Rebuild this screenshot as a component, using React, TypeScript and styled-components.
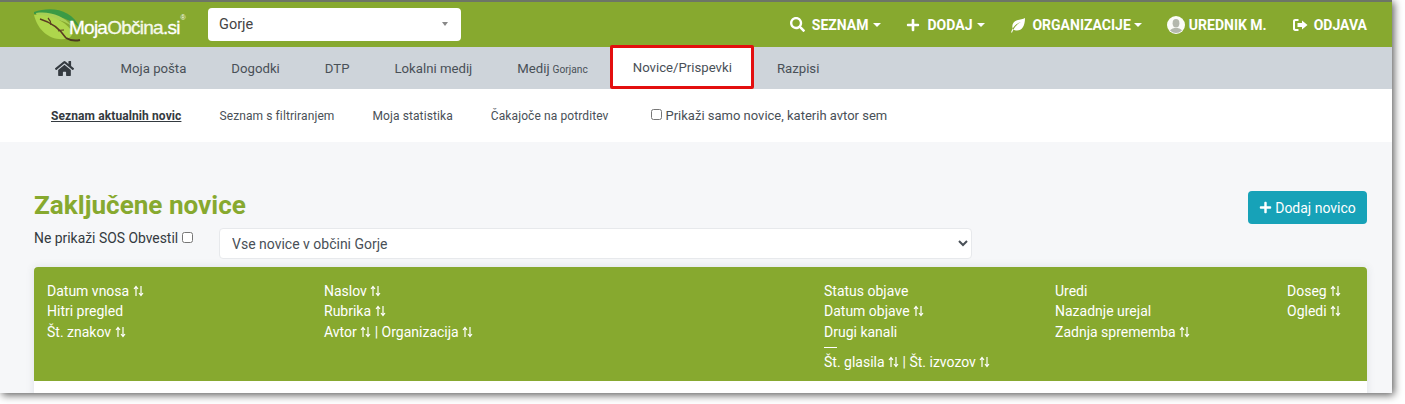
import React from 'react';
import styled, { createGlobalStyle } from 'styled-components';
import { FaHome, FaPlus, FaSearch } from 'react-icons/fa';

const GlobalStyle = createGlobalStyle`
  html, body {
    margin: 0;
    padding: 0;
    height: 404px;
    background: #fff;
  }
  body {
    font-family: Roboto, "Liberation Sans", sans-serif;
    color: #212529;
  }
  * {
    box-sizing: border-box;
  }
`;

const SortIcon = () => (
  <SortSvg viewBox="0 0 11 12" width="11" height="12" aria-hidden="true">
    <path
      d="M3 11V2M1 4l2-2.6L5 4M8 1v9M6 8l2 2.6L10 8"
      fill="none"
      stroke="currentColor"
      strokeWidth="1.2"
    />
  </SortSvg>
);

const LogoutIcon = () => (
  <svg viewBox="0 0 16 14" width="16" height="14" aria-hidden="true">
    <path
      d="M6.5 1H3.2C1.9 1 1 1.9 1 3.2v7.6C1 12.1 1.9 13 3.2 13h3.3v-2h-3c-.3 0-.5-.2-.5-.5v-7c0-.3.2-.5.5-.5h3z"
      fill="currentColor"
    />
    <path d="M10 2.5 15.5 7 10 11.5V9H5.5V5H10z" fill="currentColor" />
  </svg>
);

const LeafIcon = () => (
  <svg viewBox="0 0 16 16" width="16" height="16" aria-hidden="true">
    <path d="M15 1C15 9 12 13.5 7 13.5c-1.500 0-2.700-.4-3.500-1C5 9 8 6.500 11 5 7.500 6 4.500 8.500 2.700 11.500 1.500 8.500 3 4.500 7 3.200 10 2.200 13 2.500 15 1z" fill="currentColor" />
    <path d="M1 15.500c.4-1.400 1-2.800 1.800-4l.8.9c-.7 1-1.200 2.100-1.500 3.100z" fill="currentColor" />
  </svg>
);

const UserIcon = () => (
  <svg viewBox="0 0 18 18" width="18" height="18" aria-hidden="true">
    <circle cx="9" cy="9" r="9" fill="#fbfcf8" />
    <clipPath id="user-clip">
      <circle cx="9" cy="9" r="8" />
    </clipPath>
    <g clipPath="url(#user-clip)" fill="#b4b8ad">
      <ellipse cx="9" cy="7.2" rx="3.4" ry="4.2" />
      <path d="M2 18c0-4 2.500-5.500 5.500-6h3c3 .5 5.500 2 5.500 6z" />
    </g>
  </svg>
);

const LogoMark = () => (
  <svg viewBox="0 0 56 34" width="56" height="34" aria-hidden="true">
    <path d="M1 4C18 -2 39 1 47 20 36 9 18 6 1 6z" fill="#3b9a45" />
    <path d="M3 5C17 3 31 8 39 18c-9-6-22-9-35-9z" fill="#a8cf55" />
    <path d="M1 7c15-1 29 4 37 15 2 3 1 6-2 8C20 35 5 24 1 7z" fill="#aed64c" />
    <path d="M7 11c10 3 20 10 26 19" fill="none" stroke="#5a3b22" strokeWidth="1.6" />
    <path d="M18 17c0-3-1-5-3-7M25 23c2-1 4-1 6-1" fill="none" stroke="#5a3b22" strokeWidth="1.2" />
    <path d="M33 30c5 3 10 3 14 2" fill="none" stroke="#4b3a20" strokeWidth="2" />
  </svg>
);

const navItems = [
  { label: 'SEZNAM', icon: <FaSearch size={15} />, caret: true, gap: 7 },
  { label: 'DODAJ', icon: <FaPlus size={14} />, caret: true, gap: 8 },
  { label: 'ORGANIZACIJE', icon: <LeafIcon />, caret: true, gap: 6 },
  { label: 'UREDNIK M.', icon: <UserIcon />, caret: false, gap: 4 },
  { label: 'ODJAVA', icon: <LogoutIcon />, caret: false, gap: 6 },
];

const subLinks = ['Seznam aktualnih novic', 'Seznam s filtriranjem', 'Moja statistika', 'Čakajoče na potrditev'];

export default function App() {
  return (
    <>
      <GlobalStyle />
      <Frame>
        <TopBar>
          <Logo>
            <LogoMark />
            <LogoText>
              Moja<LogoAccent>Občina</LogoAccent>.si<LogoReg>®</LogoReg>
            </LogoText>
          </Logo>
          <CityPicker>
            Gorje
            <PickerCaret />
          </CityPicker>
          <TopNav>
            {navItems.map((item) => (
              <TopNavItem key={item.label} $gap={item.gap}>
                {item.icon}
                <span>{item.label}</span>
                {item.caret && <NavCaret />}
              </TopNavItem>
            ))}
          </TopNav>
        </TopBar>

        <MainNav>
          <HomeLink>
            <FaHome size={19} />
          </HomeLink>
          <MainLink>Moja pošta</MainLink>
          <MainLink>Dogodki</MainLink>
          <MainLink>DTP</MainLink>
          <MainLink>Lokalni medij</MainLink>
          <MainLink>
            Medij <small>Gorjanc</small>
          </MainLink>
          <ActiveLink>Novice/Prispevki</ActiveLink>
          <MainLink>Razpisi</MainLink>
        </MainNav>

        <SubNav>
          {subLinks.map((link, i) => (
            <SubLink key={link} $active={i === 0}>
              {link}
            </SubLink>
          ))}
          <AuthorFilter>
            <input type="checkbox" />
            Prikaži samo novice, katerih avtor sem
          </AuthorFilter>
        </SubNav>

        <Content>
          <TitleRow>
            <Title>Zaključene novice</Title>
            <AddButton>
              <FaPlus size={13} />
              Dodaj novico
            </AddButton>
          </TitleRow>
          <FilterRow>
            <SosFilter>
              Ne prikaži SOS Obvestil
              <input type="checkbox" />
            </SosFilter>
            <ScopeSelect defaultValue="all">
              <option value="all">Vse novice v občini Gorje</option>
            </ScopeSelect>
          </FilterRow>
          <Table>
            <TableHead>
              <HeadCol>
                <span>
                  Datum vnosa <SortIcon />
                </span>
                <span>Hitri pregled</span>
                <span>
                  Št. znakov <SortIcon />
                </span>
              </HeadCol>
              <HeadCol>
                <span>
                  Naslov <SortIcon />
                </span>
                <span>
                  Rubrika <SortIcon />
                </span>
                <span>
                  Avtor <SortIcon /> | Organizacija <SortIcon />
                </span>
              </HeadCol>
              <HeadCol>
                <span>Status objave</span>
                <span>
                  Datum objave <SortIcon />
                </span>
                <span>Drugi kanali</span>
                <ShortRule />
                <span>
                  Št. glasila <SortIcon /> | Št. izvozov <SortIcon />
                </span>
              </HeadCol>
              <HeadCol>
                <span>Uredi</span>
                <span>Nazadnje urejal</span>
                <span>
                  Zadnja sprememba <SortIcon />
                </span>
              </HeadCol>
              <HeadCol>
                <span>
                  Doseg <SortIcon />
                </span>
                <span>
                  Ogledi <SortIcon />
                </span>
              </HeadCol>
            </TableHead>
            <TableBody />
          </Table>
        </Content>
      </Frame>
    </>
  );
}

const Frame = styled.div`
  width: 1392px;
  height: 393px;
  overflow: hidden;
  border-top: 2px solid #6d7566;
  background: #f6f7f9;
  box-shadow: 2px 2px 8px rgba(0, 0, 0, 0.65);
`;

const TopBar = styled.header`
  height: 45px;
  display: flex;
  align-items: center;
  background: #87a92f;
  padding: 0 25px 0 33px;
`;

const Logo = styled.div`
  width: 175px;
  display: flex;
  align-items: center;
  flex-shrink: 0;
`;

const LogoText = styled.div`
  margin-left: -20px;
  margin-top: 7px;
  font-family: "Liberation Sans", sans-serif;
  font-size: 19px;
  letter-spacing: -0.75px;
  -webkit-text-stroke: 0.3px #fff;
  color: #fff;
  white-space: nowrap;
  position: relative;
`;

const LogoAccent = styled.span`
  color: #f1f6e2;
`;

const LogoReg = styled.sup`
  font-size: 7px;
  position: absolute;
  top: -3px;
  right: -6px;
  letter-spacing: 0;
  -webkit-text-stroke: 0;
`;

const CityPicker = styled.div`
  width: 253px;
  height: 33px;
  margin-top: -1px;
  display: flex;
  align-items: center;
  justify-content: space-between;
  padding: 0 13px 0 11px;
  background: #fff;
  border-radius: 4px;
  font-size: 14.5px;
  color: #444;
`;

const PickerCaret = styled.i`
  border-left: 3.5px solid transparent;
  border-right: 3.5px solid transparent;
  border-top: 4px solid #888;
`;

const TopNav = styled.nav`
  margin-left: auto;
  display: flex;
  align-items: center;
  gap: 25px;
`;

const TopNavItem = styled.a<{ $gap: number }>`
  display: flex;
  align-items: center;
  gap: ${({ $gap }) => $gap}px;
  color: #fff;
  font-size: 14px;
  font-weight: 700;
  white-space: nowrap;
`;

const NavCaret = styled.i`
  margin-left: -3px;
  border-left: 4px solid transparent;
  border-right: 4px solid transparent;
  border-top: 4px solid #fff;
`;

const MainNav = styled.nav`
  height: 42px;
  display: flex;
  align-items: stretch;
  background: #ced4da;
  padding-left: 33px;
  font-size: 13.2px;
`;

const MainLink = styled.a`
  display: flex;
  align-items: center;
  padding: 0 22.5px;
  color: #495057;
  white-space: nowrap;

  small {
    font-size: 10.2px;
    margin-left: 3px;
    margin-top: 2px;
  }
`;

const HomeLink = styled(MainLink)`
  color: #343a40;
  padding: 0 24px 0 22px;
`;

const ActiveLink = styled(MainLink)`
  background: #fff;
  margin-top: -2px;
  height: 44px;
  border: 3px solid #e30f0f;
  border-radius: 2px;
  padding: 0 19.5px;
`;

const SubNav = styled.div`
  height: 53px;
  display: flex;
  align-items: center;
  gap: 38px;
  padding-left: 51px;
  background: #fff;
  font-size: 12px;
  letter-spacing: 0.1px;
  color: #495057;
`;

const SubLink = styled.a<{ $active: boolean }>`
  white-space: nowrap;
  font-weight: ${({ $active }) => ($active ? 700 : 400)};
  color: ${({ $active }) => ($active ? '#343a40' : '#495057')};
  text-decoration: ${({ $active }) => ($active ? 'underline' : 'none')};
`;

const AuthorFilter = styled.label`
  display: flex;
  align-items: center;
  margin-left: 4px;
  font-size: 13px;
  letter-spacing: 0;
  color: #495057;

  input {
    width: 11px;
    height: 11px;
    margin: -3px 4px 0 0;
  }
`;

const Content = styled.main`
  padding: 49px 25px 0 34px;
`;

const TitleRow = styled.div`
  display: flex;
  justify-content: space-between;
  align-items: flex-start;
`;

const Title = styled.h1`
  margin: 0;
  font-size: 26.1px;
  line-height: 28px;
  font-weight: 700;
  color: #87a92f;
`;

const AddButton = styled.button`
  width: 119px;
  height: 33px;
  display: flex;
  align-items: center;
  justify-content: center;
  gap: 3px;
  border: 0;
  border-radius: 4px;
  background: #17a2b8;
  color: #fff;
  font-family: inherit;
  font-size: 14px;
`;

const FilterRow = styled.div`
  display: flex;
  align-items: flex-start;
  margin-top: 4px;
`;

const SosFilter = styled.label`
  width: 185px;
  display: flex;
  align-items: center;
  font-size: 13.9px;
  color: #343a40;
  padding-top: 2px;

  input {
    width: 11px;
    height: 11px;
    margin: -2px 0 0 4px;
  }
`;

const ScopeSelect = styled.select`
  width: 753px;
  height: 31px;
  padding: 0 8px;
  background: #fff;
  border: 1px solid #e7e9ec;
  border-radius: 4px;
  font-family: inherit;
  font-size: 14px;
  color: #495057;
`;

const Table = styled.section`
  margin-top: 8px;
  width: 1333px;
  box-shadow: 0 0 8px rgba(60, 70, 100, 0.12);
`;

const TableHead = styled.div`
  height: 114px;
  display: grid;
  grid-template-columns: 277px 500px 231px 232px 1fr;
  padding: 13.5px 13px 0;
  background: #87a92f;
  border-radius: 4px 4px 0 0;
  color: #fff;
  font-size: 14px;
`;

const HeadCol = styled.div`
  display: flex;
  flex-direction: column;
  line-height: 20.6px;
  white-space: nowrap;
`;

const ShortRule = styled.hr`
  width: 13px;
  height: 1px;
  margin: 5px 0 3.5px;
  border: 0;
  background: #fff;
`;

const SortSvg = styled.svg`
  vertical-align: -1px;
`;

const TableBody = styled.div`
  height: 20px;
  background: #fff;
`;
